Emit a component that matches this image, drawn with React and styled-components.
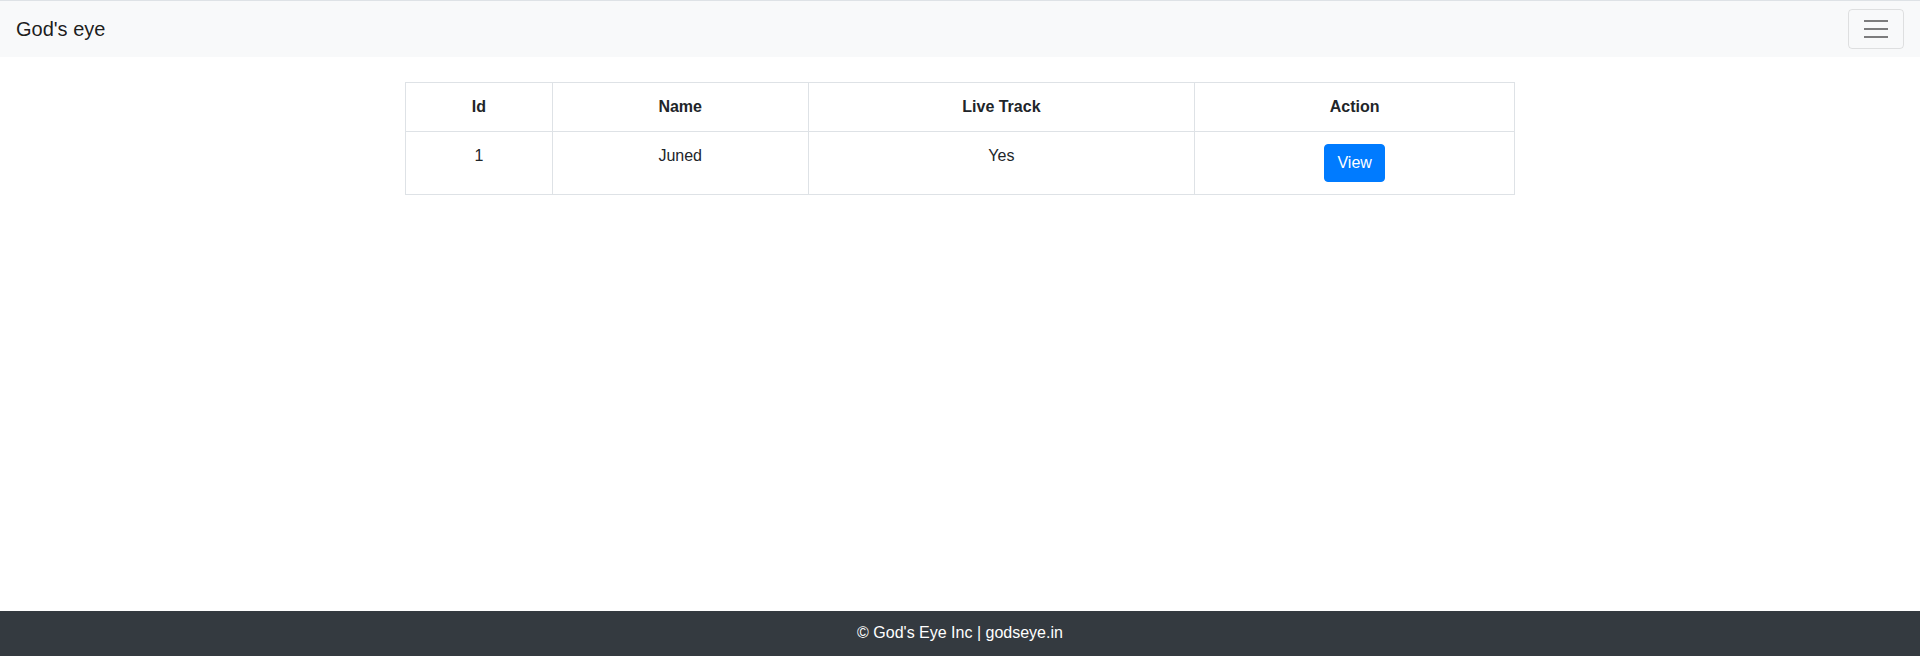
import React from "react";
import styled, { createGlobalStyle } from "styled-components";

const GlobalStyle = createGlobalStyle`
  * { box-sizing: border-box; }
  body {
    margin: 0;
    font-family: "Liberation Sans", Arial, sans-serif;
    font-size: 16px;
    line-height: 1.5;
    color: #212529;
    background: #fff;
  }
`;

const Page = styled.div`
  min-height: 100vh;
  display: flex;
  flex-direction: column;
  border-top: 1px solid #dee2e6;
`;

const Navbar = styled.nav`
  display: flex;
  align-items: center;
  justify-content: space-between;
  padding: 8px 16px;
  background: #f8f9fa;
`;

const Brand = styled.a`
  font-size: 20px;
  line-height: 30px;
  padding: 5px 0;
  color: rgba(0, 0, 0, 0.9);
  text-decoration: none;
`;

const Toggler = styled.button`
  display: flex;
  align-items: center;
  justify-content: center;
  width: 56px;
  height: 40px;
  padding: 4px 12px;
  background: transparent;
  border: 1px solid rgba(0, 0, 0, 0.1);
  border-radius: 4px;
  cursor: pointer;
`;

const Container = styled.main`
  width: 1140px;
  max-width: 100%;
  margin: 25px auto 0;
  padding: 0 15px;
  flex: 1;
`;

const Table = styled.table`
  width: 100%;
  table-layout: fixed;
  border-collapse: collapse;
  border: 1px solid #dee2e6;
  color: #212529;
`;

const HeadCell = styled.th`
  padding: 12px;
  border: 1px solid #dee2e6;
  font-weight: 700;
  text-align: center;
  vertical-align: bottom;
  width: ${(p) => p.$w};
`;

const Cell = styled.td`
  padding: 12px;
  border: 1px solid #dee2e6;
  text-align: center;
  vertical-align: top;
`;

const ViewButton = styled.button`
  font-family: inherit;
  font-size: 16px;
  line-height: 24px;
  padding: 6px 12px;
  color: #fff;
  background: #007bff;
  border: 1px solid #007bff;
  border-radius: 4px;
  cursor: pointer;
`;

const Footer = styled.footer`
  background: #343a40;
  color: #fff;
  text-align: center;
  padding: 10px 0 11px;
  line-height: 24px;
`;

const users = [{ id: 1, name: "Juned", live: "Yes" }];

export default function App() {
  return (
    <>
      <GlobalStyle />
      <Page>
        <Navbar>
          <Brand href="#">God's eye</Brand>
          <Toggler aria-label="Toggle navigation">
            <svg width="30" height="30" viewBox="0 0 30 30">
              <path
                d="M3 7h24M3 15h24M3 23h24"
                stroke="rgba(0,0,0,0.5)"
                strokeWidth="2"
              />
            </svg>
          </Toggler>
        </Navbar>
        <Container>
          <Table>
            <thead>
              <tr>
                <HeadCell $w="13.24%">Id</HeadCell>
                <HeadCell $w="23.06%">Name</HeadCell>
                <HeadCell $w="34.87%">Live Track</HeadCell>
                <HeadCell $w="28.83%">Action</HeadCell>
              </tr>
            </thead>
            <tbody>
              {users.map((u) => (
                <tr key={u.id}>
                  <Cell>{u.id}</Cell>
                  <Cell>{u.name}</Cell>
                  <Cell>{u.live}</Cell>
                  <Cell>
                    <ViewButton>View</ViewButton>
                  </Cell>
                </tr>
              ))}
            </tbody>
          </Table>
        </Container>
        <Footer>© God's Eye Inc | godseye.in</Footer>
      </Page>
    </>
  );
}
